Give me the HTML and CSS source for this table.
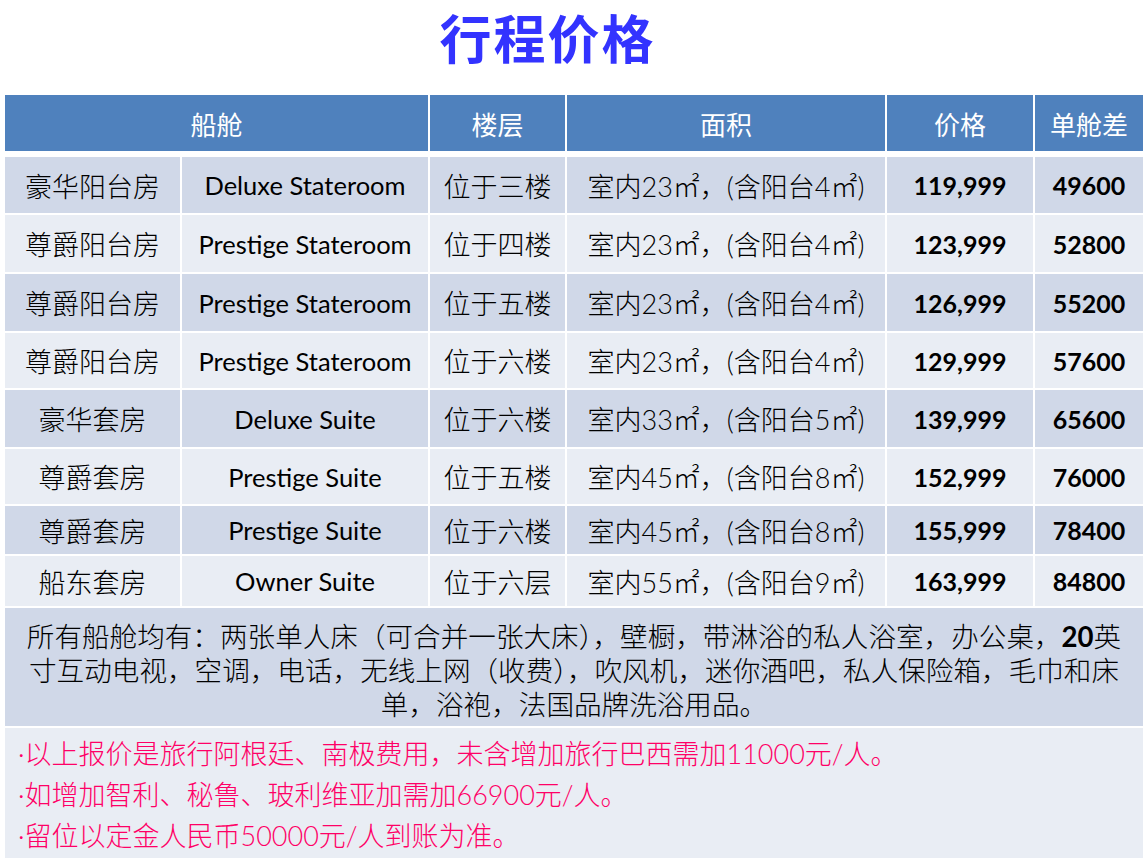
FILE: index.html
```html
<!DOCTYPE html>
<html lang="zh-CN">
<head>
<meta charset="utf-8">
<title>行程价格</title>
<link rel="stylesheet" href="styles.css">
</head>
<body>
<div class="page">
  <h1 class="title">行程价格</h1>
  <div class="table">
    <div class="grid head">
      <div class="hc span2">船舱</div>
      <div class="hc">楼层</div>
      <div class="hc">面积</div>
      <div class="hc">价格</div>
      <div class="hc">单舱差</div>
    </div>
    <div class="grid body">
      <div class="c cn odd r1">豪华阳台房</div>
      <div class="c en odd r1">Deluxe Stateroom</div>
      <div class="c cn odd r1">位于三楼</div>
      <div class="c area odd r1">室内23㎡，(含阳台4㎡)</div>
      <div class="c num odd r1">119,999</div>
      <div class="c num odd r1">49600</div>

      <div class="c cn even">尊爵阳台房</div>
      <div class="c en even">Prestige Stateroom</div>
      <div class="c cn even">位于四楼</div>
      <div class="c area even">室内23㎡，(含阳台4㎡)</div>
      <div class="c num even">123,999</div>
      <div class="c num even">52800</div>

      <div class="c cn odd">尊爵阳台房</div>
      <div class="c en odd">Prestige Stateroom</div>
      <div class="c cn odd">位于五楼</div>
      <div class="c area odd">室内23㎡，(含阳台4㎡)</div>
      <div class="c num odd">126,999</div>
      <div class="c num odd">55200</div>

      <div class="c cn even">尊爵阳台房</div>
      <div class="c en even">Prestige Stateroom</div>
      <div class="c cn even">位于六楼</div>
      <div class="c area even">室内23㎡，(含阳台4㎡)</div>
      <div class="c num even">129,999</div>
      <div class="c num even">57600</div>

      <div class="c cn odd">豪华套房</div>
      <div class="c en odd">Deluxe Suite</div>
      <div class="c cn odd">位于六楼</div>
      <div class="c area odd">室内33㎡，(含阳台5㎡)</div>
      <div class="c num odd">139,999</div>
      <div class="c num odd">65600</div>

      <div class="c cn even">尊爵套房</div>
      <div class="c en even">Prestige Suite</div>
      <div class="c cn even">位于五楼</div>
      <div class="c area even">室内45㎡，(含阳台8㎡)</div>
      <div class="c num even">152,999</div>
      <div class="c num even">76000</div>

      <div class="c cn odd">尊爵套房</div>
      <div class="c en odd">Prestige Suite</div>
      <div class="c cn odd">位于六楼</div>
      <div class="c area odd">室内45㎡，(含阳台8㎡)</div>
      <div class="c num odd">155,999</div>
      <div class="c num odd">78400</div>

      <div class="c cn even">船东套房</div>
      <div class="c en even">Owner Suite</div>
      <div class="c cn even">位于六层</div>
      <div class="c area even">室内55㎡，(含阳台9㎡)</div>
      <div class="c num even">163,999</div>
      <div class="c num even">84800</div>

      <div class="c full odd foot">
        <span class="line">所有船舱均有：两张单人床（可合并一张大床），壁橱，带淋浴的私人浴室，办公桌，<span class="b">20</span>英</span>
        <span class="line">寸互动电视，空调，电话，无线上网（收费），吹风机，迷你酒吧，私人保险箱，毛巾和床</span>
        <span class="line">单，浴袍，法国品牌洗浴用品。</span>
      </div>

      <div class="c full even notes">
        <p class="note">·以上报价是旅行阿根廷、南极费用，未含增加旅行巴西需加11000元/人。</p>
        <p class="note">·如增加智利、秘鲁、玻利维亚加需加66900元/人。</p>
        <p class="note">·留位以定金人民币50000元/人到账为准。</p>
      </div>
    </div>
  </div>
</div>
</body>
</html>
```
FILE: styles.css
```css
html, body {
  margin: 0;
  padding: 0;
  background: #ffffff;
}

.page {
  width: 1147px;
  height: 864px;
  overflow: hidden;
}

.title {
  margin: 0;
  height: 95px;
  padding: 9px 52px 0 0;
  box-sizing: border-box;
  text-align: center;
  font-family: "Noto Sans CJK SC", sans-serif;
  font-weight: 700;
  font-size: 52px;
  line-height: 56px;
  color: #3333ff;
  letter-spacing: 2px;
}

.table {
  margin-left: 5px;
  width: 1138px;
}

.grid {
  display: grid;
  grid-template-columns: 175px 246px 135px 318px 146px 108px;
  column-gap: 2px;
  row-gap: 2px;
}

.head {
  grid-template-rows: 56px;
}

.body {
  margin-top: 6px;
  grid-template-rows: 56px 57px 57px 55px 57px 55px 48px 50px 118px 130px;
}

.hc {
  background: #4f81bd;
  color: #ffffff;
  font-family: "Noto Sans CJK SC", sans-serif;
  font-size: 26px;
  display: flex;
  align-items: center;
  justify-content: center;
}

.span2 {
  grid-column: span 2;
}

.c {
  display: flex;
  align-items: center;
  justify-content: center;
  color: #000000;
}

.odd { background: #d0d8e8; }
.even { background: #e9edf4; }

.cn {
  font-family: "Noto Sans CJK SC", sans-serif;
  font-weight: 300;
  font-size: 27px;
}

.en {
  font-family: Lato, "Open Sans", sans-serif;
  font-size: 25.5px;
}

.area {
  font-family: Lato, "Noto Sans CJK SC", sans-serif;
  font-weight: 300;
  font-size: 27px;
}

.num {
  font-family: Lato, "Open Sans", sans-serif;
  font-weight: 700;
  font-size: 25px;
}

.full {
  grid-column: 1 / -1;
}

.foot {
  display: flex;
  flex-direction: column;
  justify-content: flex-start;
  align-items: center;
  padding-top: 10px;
  box-sizing: border-box;
  font-family: "Noto Sans CJK SC", sans-serif;
  font-weight: 300;
  font-size: 27.6px;
}

.line {
  display: block;
  height: 34px;
  line-height: 34px;
  white-space: nowrap;
}

.foot .b {
  font-family: Lato, sans-serif;
  font-weight: 700;
}

.notes {
  display: block;
  padding: 5px 0 0 13px;
  box-sizing: border-box;
}

.note {
  margin: 0;
  height: 41px;
  line-height: 41px;
  font-family: Lato, "Noto Sans CJK SC", sans-serif;
  font-weight: 300;
  font-size: 27px;
  color: #ff0066;
}
```
